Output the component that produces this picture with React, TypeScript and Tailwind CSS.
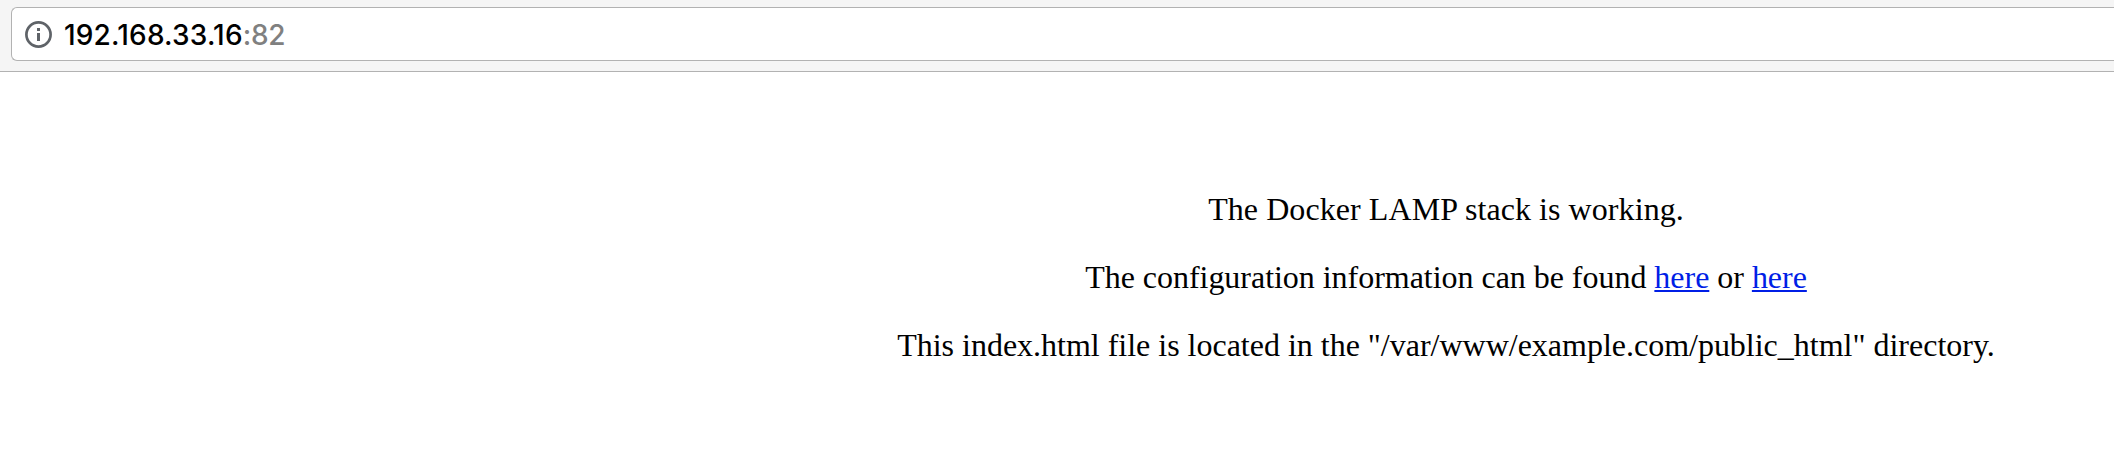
export default function App() {
  return (
    <div className="flex h-[452px] w-full flex-col overflow-hidden bg-white">
      <header className="flex h-[72px] shrink-0 border-b border-[#b2b2b2] bg-[#f5f5f5] pt-[7px] pl-[11px]">
        <div className="flex h-[54px] flex-1 items-center rounded-l-[6px] border border-r-0 border-[#b2b2b2] bg-white pl-[13px]">
          <svg className="mr-[12px] size-[27px]" viewBox="0 0 27 27" fill="none">
            <circle cx="13.5" cy="13.5" r="12.1" stroke="#5f6368" strokeWidth="2.7" />
            <path d="M12 12h3v8h-3zM12 7h3v3h-3z" fill="#5f6368" />
          </svg>
          <span className="pt-[2px] font-[Inter,sans-serif] text-[28px] font-medium tracking-[0.18px] whitespace-nowrap text-black">
            192.168.33.16<span className="tracking-[-0.3px] text-[#808080]">:82</span>
          </span>
        </div>
      </header>
      <main className="flex flex-col items-center gap-[32px] pt-[119px] pl-[778px] font-['Liberation_Serif',serif] text-[32px] leading-[36px] whitespace-nowrap text-black">
        <p className="tracking-[0.07px]">The Docker LAMP stack is working.</p>
        <p className="tracking-[-0.03px]">
          The configuration information can be found <a className="text-[#001ee6] underline decoration-2 underline-offset-2">here</a> or{' '}
          <a className="text-[#001ee6] underline decoration-2 underline-offset-2">here</a>
        </p>
        <p className="tracking-[-0.01px]">This index.html file is located in the "/var/www/example.com/public_html" directory.</p>
      </main>
    </div>
  );
}
